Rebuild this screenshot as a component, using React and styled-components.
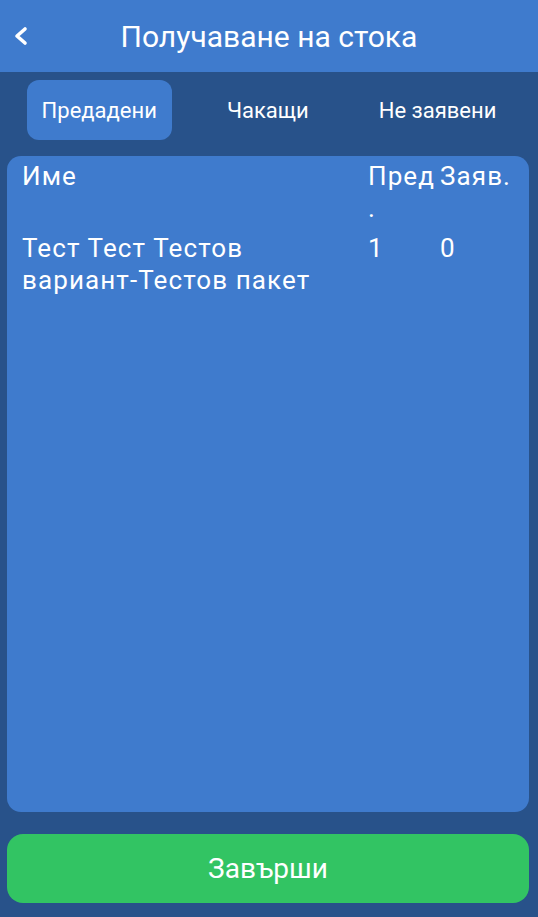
import styled, { createGlobalStyle } from "styled-components";

const GlobalStyle = createGlobalStyle`
  html, body {
    margin: 0;
    padding: 0;
    background: #28528a;
    font-family: Roboto, "Noto Sans", "Liberation Sans", sans-serif;
  }
`;

const Page = styled.div`
  height: 100vh;
  display: flex;
  flex-direction: column;
  background: #28528a;
  color: #fff;
  box-sizing: border-box;
  padding-bottom: 14px;
`;

const Header = styled.header`
  height: 72px;
  flex-shrink: 0;
  display: grid;
  grid-template-columns: 44px 1fr 44px;
  align-items: center;
  background: #3f7bcd;
`;

const BackButton = styled.button`
  display: flex;
  align-items: center;
  justify-content: flex-start;
  padding: 0 0 0 13px;
  height: 40px;
  background: none;
  border: none;
  color: #fff;
  cursor: pointer;
`;

const Title = styled.h1`
  margin: 0;
  text-align: center;
  font-size: 30px;
  font-weight: 400;
`;

const Tabs = styled.nav`
  display: flex;
  justify-content: center;
  gap: 40px;
  padding-top: 8px;
  flex-shrink: 0;
`;

const Tab = styled.button`
  height: 60px;
  padding: 0 15px;
  border: none;
  border-radius: 12px;
  background: ${(p) => (p.$active ? "#3f7bcd" : "transparent")};
  color: #fff;
  font-family: inherit;
  font-size: 22px;
  cursor: pointer;
`;

const Card = styled.section`
  flex: 1;
  margin: 16px 9px 0 7px;
  padding: 4px 12px 0 15px;
  background: #3f7bcd;
  border-radius: 14px;
`;

const Row = styled.div`
  display: grid;
  grid-template-columns: 1fr 70px 77px;
  column-gap: 2px;
  font-size: 26px;
  line-height: 32px;
  letter-spacing: 1.1px;
  margin-bottom: 8px;
`;

const Cell = styled.div`
  min-width: 0;
  padding-right: ${(p) => (p.$name ? "44px" : "0")};
  overflow-wrap: anywhere;
`;

const FinishButton = styled.button`
  flex-shrink: 0;
  height: 69px;
  margin: 22px 9px 0 7px;
  border: none;
  border-radius: 16px;
  background: #32c463;
  color: #fff;
  font-family: inherit;
  font-size: 28px;
  cursor: pointer;
`;

const items = [
  { name: "Тест Тест Тестов вариант-Тестов пакет", given: 1, ordered: 0 },
];

export default function App() {
  return (
    <Page>
      <GlobalStyle />
      <Header>
        <BackButton aria-label="Назад">
          <svg width="16" height="20" viewBox="0 0 16 20">
            <polyline
              points="12,3 4,10 12,17"
              fill="none"
              stroke="#fff"
              strokeWidth="3.6"
              strokeLinecap="round"
              strokeLinejoin="round"
            />
          </svg>
        </BackButton>
        <Title>Получаване на стока</Title>
        <span />
      </Header>
      <Tabs>
        <Tab $active>Предадени</Tab>
        <Tab>Чакащи</Tab>
        <Tab>Не заявени</Tab>
      </Tabs>
      <Card>
        <Row>
          <Cell $name>Име</Cell>
          <Cell>Пред.</Cell>
          <Cell>Заяв.</Cell>
        </Row>
        {items.map((item) => (
          <Row key={item.name}>
            <Cell $name>{item.name}</Cell>
            <Cell>{item.given}</Cell>
            <Cell>{item.ordered}</Cell>
          </Row>
        ))}
      </Card>
      <FinishButton>Завърши</FinishButton>
    </Page>
  );
}
